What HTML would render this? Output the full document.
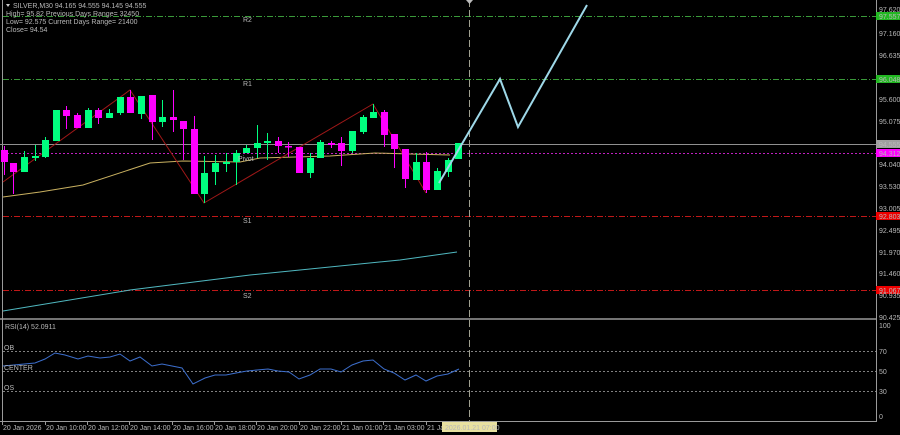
<!DOCTYPE html>
<html><head><meta charset="utf-8"><style>
html,body{margin:0;padding:0;background:#000;width:900px;height:435px;overflow:hidden}
svg{display:block}
text{font-family:"Liberation Sans",sans-serif;font-size:7px;fill:#b8b8b8}
</style></head><body>
<svg width="900" height="435" xmlns="http://www.w3.org/2000/svg">
<rect width="900" height="435" fill="#000"/>
<line x1="2.5" y1="0" x2="2.5" y2="421" stroke="#9a9a9a"/>
<line x1="876.5" y1="0" x2="876.5" y2="421" stroke="#9a9a9a"/>
<line x1="0" y1="319" x2="877" y2="319" stroke="#9a9a9a" stroke-width="1.5"/>
<line x1="0" y1="421.5" x2="877" y2="421.5" stroke="#9a9a9a"/>
<!-- levels -->
<g stroke-width="1" stroke-dasharray="6,2,1,2">
<line x1="3" y1="16.5" x2="876" y2="16.5" stroke="#3a9a3a"/>
<line x1="3" y1="79.5" x2="876" y2="79.5" stroke="#3a9a3a"/>
<line x1="3" y1="216.5" x2="876" y2="216.5" stroke="#c01818"/>
<line x1="3" y1="290.5" x2="876" y2="290.5" stroke="#c01818"/>
</g>
<line x1="0" y1="144.5" x2="876" y2="144.5" stroke="#909090"/>
<line x1="3" y1="153.5" x2="876" y2="153.5" stroke="#c020c0" stroke-dasharray="2,2"/>
<g stroke="#808080" stroke-dasharray="2,2">
<line x1="3" y1="351.5" x2="876" y2="351.5"/>
<line x1="3" y1="371.5" x2="876" y2="371.5"/>
<line x1="3" y1="391.5" x2="876" y2="391.5"/>
</g>
<line x1="469.5" y1="0" x2="469.5" y2="421" stroke="#a0a090" stroke-dasharray="7,3"/>
<text x="243" y="22">R2</text><text x="243" y="86">R1</text><text x="243" y="223">S1</text><text x="243" y="298">S2</text>
<!-- MAs -->
<polyline fill="none" stroke="#50b8c0" stroke-width="1" points="3,311 130,290 250,275 400,260 457,252"/>
<polyline fill="none" stroke="#c8b060" stroke-width="1" points="3,197 40,192 83,185 150,163 183,161 240,162 260,158 330,156 375,153 410,154 450,155"/>
<!-- zigzag -->
<polyline fill="none" stroke="#a01818" stroke-width="1" points="3,182 130,90 204,203 373,104 426,193"/>
<!-- candles -->
<g id="c">
<g stroke="#00ff7f" fill="#00ff7f">
<line x1="24.5" y1="151" x2="24.5" y2="172"/><rect x="21" y="157" width="7" height="15" stroke="none"/>
<line x1="35.5" y1="145" x2="35.5" y2="161"/><rect x="32" y="156" width="7" height="2" stroke="none"/>
<line x1="45.5" y1="137" x2="45.5" y2="158"/><rect x="42" y="140" width="7" height="17" stroke="none"/>
<rect x="53" y="110" width="7" height="31" stroke="none"/>
<line x1="88.5" y1="108" x2="88.5" y2="128"/><rect x="85" y="110" width="7" height="18" stroke="none"/>
<line x1="109.5" y1="109" x2="109.5" y2="118"/><rect x="106" y="113" width="7" height="5" stroke="none"/>
<line x1="120.5" y1="97" x2="120.5" y2="115"/><rect x="117" y="97" width="7" height="16" stroke="none"/>
<line x1="141.5" y1="96" x2="141.5" y2="119"/><rect x="138" y="96" width="7" height="18" stroke="none"/>
<line x1="162.5" y1="100" x2="162.5" y2="127"/><rect x="159" y="117" width="7" height="5" stroke="none"/>
<line x1="204.5" y1="156" x2="204.5" y2="203"/><rect x="201" y="173" width="7" height="21" stroke="none"/>
<line x1="215.5" y1="155" x2="215.5" y2="185"/><rect x="212" y="163" width="7" height="9" stroke="none"/>
<line x1="226.5" y1="153" x2="226.5" y2="172"/><rect x="223" y="162" width="7" height="2" stroke="none"/>
<line x1="236.5" y1="150" x2="236.5" y2="185"/><rect x="233" y="153" width="7" height="9" stroke="none"/>
<line x1="246.5" y1="145" x2="246.5" y2="153"/><rect x="243" y="148" width="7" height="5" stroke="none"/>
<line x1="257.5" y1="125" x2="257.5" y2="158"/><rect x="254" y="143" width="7" height="5" stroke="none"/>
<line x1="267.5" y1="133" x2="267.5" y2="160"/><rect x="264" y="141" width="7" height="2" stroke="none"/>
<line x1="310.5" y1="153" x2="310.5" y2="178"/><rect x="307" y="158" width="7" height="15" stroke="none"/>
<line x1="320.5" y1="140" x2="320.5" y2="158"/><rect x="317" y="142" width="7" height="16" stroke="none"/>
<line x1="352.5" y1="131" x2="352.5" y2="153"/><rect x="349" y="131" width="7" height="20" stroke="none"/>
<line x1="363.5" y1="115" x2="363.5" y2="134"/><rect x="360" y="117" width="7" height="15" stroke="none"/>
<line x1="373.5" y1="104" x2="373.5" y2="118"/><rect x="370" y="112" width="7" height="6" stroke="none"/>
<line x1="416.5" y1="153" x2="416.5" y2="180"/><rect x="413" y="162" width="7" height="18" stroke="none"/>
<line x1="437.5" y1="168" x2="437.5" y2="190"/><rect x="434" y="171" width="7" height="19" stroke="none"/>
<line x1="448.5" y1="158" x2="448.5" y2="177"/><rect x="445" y="160" width="7" height="12" stroke="none"/>
<rect x="455" y="143" width="7" height="16" stroke="none"/>
</g>
<g stroke="#ff00ff" fill="#ff00ff">
<line x1="4.5" y1="146" x2="4.5" y2="175"/><rect x="1" y="150" width="7" height="12" stroke="none"/>
<line x1="13.5" y1="163" x2="13.5" y2="194"/><rect x="10" y="163" width="7" height="9" stroke="none"/>
<line x1="66.5" y1="106" x2="66.5" y2="129"/><rect x="63" y="110" width="7" height="6" stroke="none"/>
<line x1="77.5" y1="113" x2="77.5" y2="128"/><rect x="74" y="115" width="7" height="13" stroke="none"/>
<line x1="98.5" y1="108" x2="98.5" y2="124"/><rect x="95" y="110" width="7" height="8" stroke="none"/>
<line x1="130.5" y1="90" x2="130.5" y2="113"/><rect x="127" y="97" width="7" height="16" stroke="none"/>
<line x1="152.5" y1="95" x2="152.5" y2="140"/><rect x="149" y="95" width="7" height="27" stroke="none"/>
<line x1="173.5" y1="90" x2="173.5" y2="132"/><rect x="170" y="117" width="7" height="3" stroke="none"/>
<line x1="183.5" y1="121" x2="183.5" y2="160"/><rect x="180" y="121" width="7" height="8" stroke="none"/>
<line x1="194.5" y1="116" x2="194.5" y2="194"/><rect x="191" y="129" width="7" height="65" stroke="none"/>
<line x1="278.5" y1="137" x2="278.5" y2="153"/><rect x="275" y="141" width="7" height="5" stroke="none"/>
<line x1="288.5" y1="142" x2="288.5" y2="157"/><rect x="285" y="146" width="7" height="1.5" stroke="none"/>
<line x1="299.5" y1="147" x2="299.5" y2="173"/><rect x="296" y="147" width="7" height="26" stroke="none"/>
<line x1="331.5" y1="141" x2="331.5" y2="148"/><rect x="328" y="143" width="7" height="2" stroke="none"/>
<line x1="341.5" y1="137" x2="341.5" y2="166"/><rect x="338" y="143" width="7" height="8" stroke="none"/>
<line x1="384.5" y1="110" x2="384.5" y2="147"/><rect x="381" y="112" width="7" height="23" stroke="none"/>
<line x1="394.5" y1="134" x2="394.5" y2="168"/><rect x="391" y="134" width="7" height="15" stroke="none"/>
<line x1="405.5" y1="149" x2="405.5" y2="188"/><rect x="402" y="149" width="7" height="30" stroke="none"/>
<line x1="426.5" y1="152" x2="426.5" y2="193"/><rect x="423" y="162" width="7" height="28" stroke="none"/>
</g>
</g>
<text x="238" y="161" fill="#d0d0d0">Pivot</text>
<!-- projection -->
<polyline fill="none" stroke="#9ed8e8" stroke-width="2" points="439,183 500,79 518,127 587,5"/>
<polygon points="466,0 473,0 469.5,4" fill="#bbb"/>
<!-- header -->
<polygon points="6,4 10,4 8,7" fill="#ccc"/>
<text x="13" y="8">SILVER,M30  94.165 94.555 94.145 94.555</text>
<text x="6" y="16">High= 95.82     Previous Days Range= 32450</text>
<text x="6" y="24">Low= 92.575     Current Days Range= 21400</text>
<text x="6" y="32">Close= 94.54</text>
<!-- RSI -->
<polyline fill="none" stroke="#3c6ecc" stroke-width="1" points="3,366 35,363 45,359 55,353 65,355 78,359 88,356 100,358 110,357 120,354 130,361 140,357 152,366 162,364 172,366 182,368 193,384 205,378 215,375 226,375 236,373 247,371 257,370 268,369 278,371 289,372 299,379 310,375 320,369 331,369 341,372 352,365 363,361 373,360 384,369 394,373 405,380 416,375 426,381 437,376 448,374 459,369"/>
<text x="5" y="329">RSI(14) 52.0911</text>
<text x="4" y="350">OB</text><text x="4" y="370">CENTER</text><text x="4" y="390">OS</text>
<!-- price axis -->
<g>
<text x="879" y="12">97.620</text>
<rect x="876" y="12" width="24" height="8" fill="#22b822"/><text x="879" y="19" fill="#000">97.557</text>
<text x="879" y="36">97.160</text>
<text x="879" y="58">96.635</text>
<rect x="876" y="75" width="24" height="8" fill="#22b822"/><text x="879" y="82" fill="#000">96.048</text>
<text x="879" y="102">95.600</text>
<text x="879" y="124">95.075</text>
<rect x="876" y="140" width="24" height="8" fill="#a0a0a0"/><text x="879" y="147" fill="#000">94.555</text>
<rect x="876" y="149" width="24" height="8" fill="#ff00ff"/><text x="879" y="156" fill="#000">94.312</text>
<text x="879" y="167">94.040</text>
<text x="879" y="189">93.530</text>
<text x="879" y="211">93.005</text>
<rect x="876" y="212" width="24" height="8" fill="#ee0000"/><text x="879" y="219" fill="#000">92.803</text>
<text x="879" y="233">92.495</text>
<text x="879" y="255">91.970</text>
<text x="879" y="276">91.460</text>
<rect x="876" y="286" width="24" height="8" fill="#ee0000"/><text x="879" y="293" fill="#000">91.067</text>
<text x="879" y="298">90.935</text>
<text x="879" y="320">90.425</text>
<text x="879" y="328">100</text>
<text x="879" y="354">70</text>
<text x="879" y="374">50</text>
<text x="879" y="394">30</text>
<text x="879" y="419">0</text>
</g>
<!-- time axis -->
<g stroke="#9a9a9a">
<line x1="2.5" y1="421" x2="2.5" y2="425"/><line x1="45.5" y1="421" x2="45.5" y2="425"/><line x1="87.5" y1="421" x2="87.5" y2="425"/><line x1="129.5" y1="421" x2="129.5" y2="425"/><line x1="172.5" y1="421" x2="172.5" y2="425"/><line x1="214.5" y1="421" x2="214.5" y2="425"/><line x1="256.5" y1="421" x2="256.5" y2="425"/><line x1="299.5" y1="421" x2="299.5" y2="425"/><line x1="341.5" y1="421" x2="341.5" y2="425"/><line x1="383.5" y1="421" x2="383.5" y2="425"/><line x1="426.5" y1="421" x2="426.5" y2="425"/>
</g>
<text x="3" y="430">20 Jan 2026</text>
<text x="46" y="430">20 Jan 10:00</text>
<text x="88" y="430">20 Jan 12:00</text>
<text x="130" y="430">20 Jan 14:00</text>
<text x="173" y="430">20 Jan 16:00</text>
<text x="215" y="430">20 Jan 18:00</text>
<text x="257" y="430">20 Jan 20:00</text>
<text x="300" y="430">20 Jan 22:00</text>
<text x="342" y="430">21 Jan 01:00</text>
<text x="384" y="430">21 Jan 03:00</text>
<text x="427" y="430">21 Jan</text>
<rect x="442" y="422" width="55" height="10" fill="#e8e0a0"/>
<text x="445" y="430" fill="#000">2026.01.21 07:00</text>
</svg>
</body></html>
